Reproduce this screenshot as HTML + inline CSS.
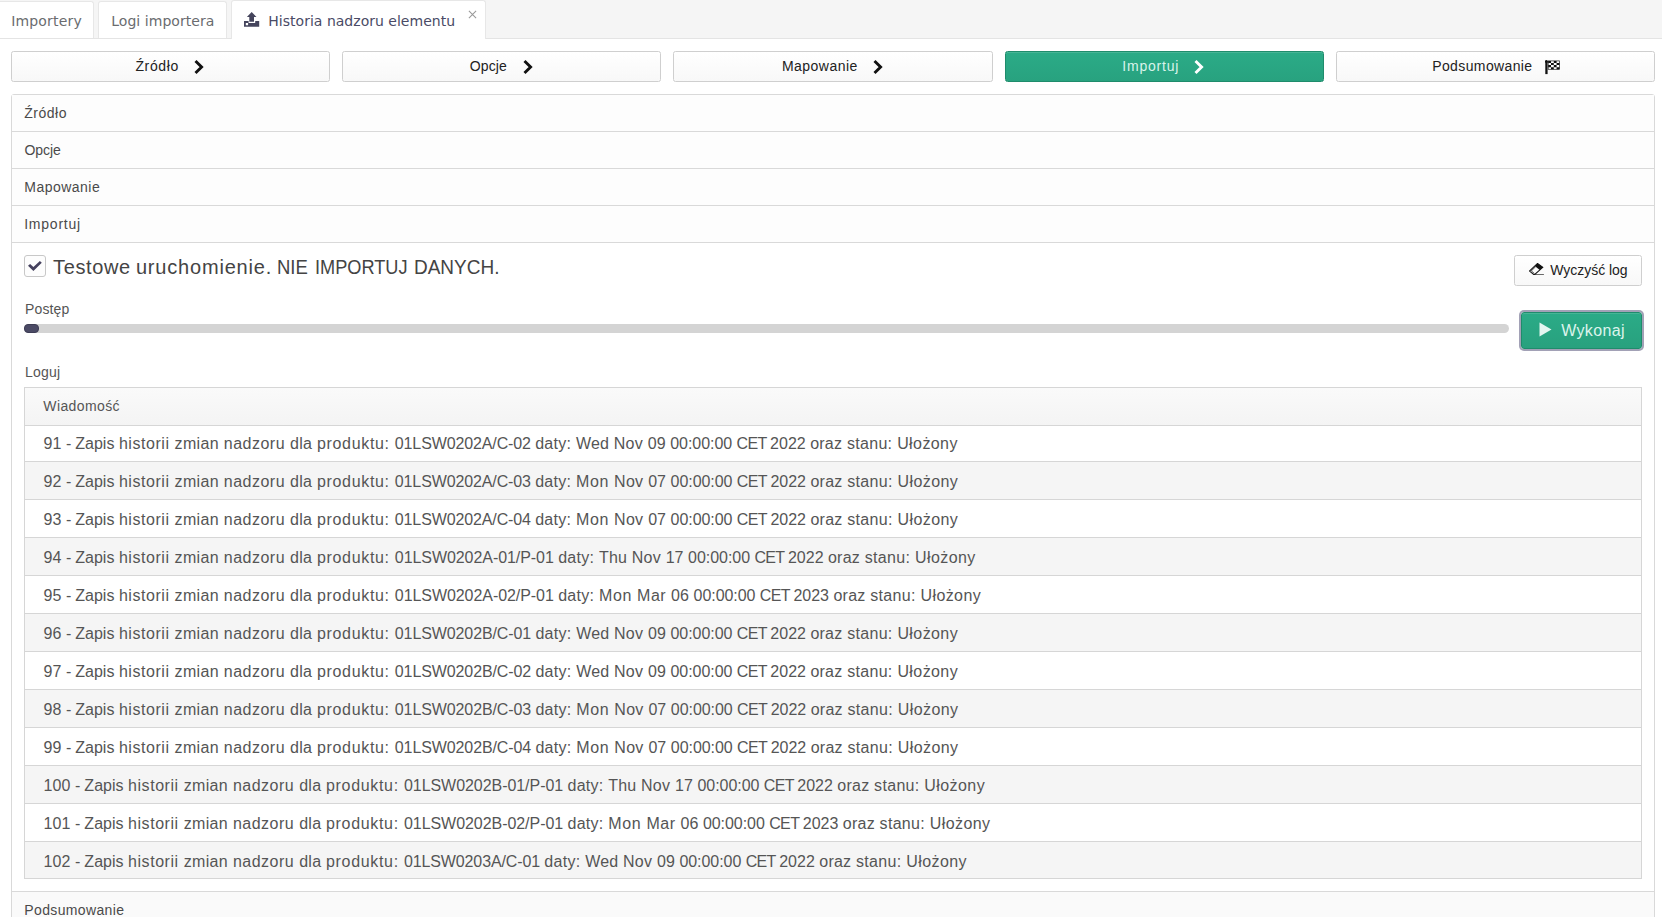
<!DOCTYPE html>
<html lang="pl">
<head>
<meta charset="utf-8">
<title>Historia nadzoru elementu</title>
<style>
*{box-sizing:border-box;margin:0;padding:0}
html,body{width:1662px;height:917px;overflow:hidden;background:#fff}
body{font-family:"Liberation Sans",sans-serif;font-size:14px;color:#444;position:relative}
.abs{position:absolute}
.t{position:absolute;white-space:pre;line-height:1}
#a1,#a2,#a3,#a4,#a5{color:#4a4a4a}
/* tab bar */
#tabbar{left:0;top:0;width:1662px;height:39px;background:#f5f5f5;border-bottom:1px solid #e4e4e4}
.tab{position:absolute;top:1px;height:37px;background:#fff;border:1px solid #e7e7e7;border-bottom:none;border-radius:3px 3px 0 0;color:#6a6c6f;font-size:14px;font-family:"DejaVu Sans","Liberation Sans",sans-serif}
.tab.act{top:0;height:39px;background:#fff;color:#4a4b66}
/* wizard buttons */
.wb{position:absolute;top:51px;height:31px;width:319.2px;border:1px solid #cfcfcf;border-radius:2.5px;background:linear-gradient(#ffffff,#f8f8f8);color:#222}
.wb.on{background:linear-gradient(#2bab87,#28a27f);border-color:#1f8c6c;color:#d9f3ea;box-shadow:inset 0 1px 0 rgba(255,255,255,.13)}
/* accordion */
#acc{left:11px;top:94px;width:1644px;height:840px;border:1px solid #d9d9d9;border-radius:3px;background:#fff}
.hl{position:absolute;left:11px;width:1644px;height:1px;background:#d9d9d9}
.hbg{position:absolute;left:12px;width:1642px;height:36px;background:#fdfdfd}
.btn{position:absolute;border:1px solid #cfcfcf;border-radius:2.5px;background:linear-gradient(#ffffff,#f8f8f8);color:#222}
/* table */
#tbl{left:24px;top:387px;width:1618px;height:492px;border:1px solid #d6d6d6;overflow:hidden;background:#fff}
.row{position:absolute;left:0;width:1616px;height:38px;border-bottom:1px solid #d6d6d6;font-size:16px;color:#555}
.row.ev{background:#f5f5f5}
.row span{position:absolute;left:18.3px;white-space:nowrap;line-height:1}
/*ROWLS*/
.row i{font-style:normal}
.row span{margin-left:0.2px}
.k0{letter-spacing:-0.65px}
.k1{letter-spacing:-0.234px}
.k2{letter-spacing:-0.122px}
.k3{letter-spacing:-0.106px}
.k4{letter-spacing:-0.065px}
.k5{letter-spacing:-0.052px}
.k6{letter-spacing:0.017px}
.k7{letter-spacing:0.06px}
.k8{letter-spacing:-0.05px}
.k9{letter-spacing:0.104px}
.k10{letter-spacing:0px}
.k11{letter-spacing:0.158px}
.k12{letter-spacing:0.174px}
.k13{letter-spacing:0.233px}
.k14{letter-spacing:0.277px}
.k15{letter-spacing:0.281px}
.k16{letter-spacing:0.283px}
.k17{letter-spacing:0.315px}
.k18{letter-spacing:0.361px}
.k19{letter-spacing:0.415px}
.k20{letter-spacing:0.489px}
.k21{letter-spacing:0.508px}
.k22{letter-spacing:0.546px}
.k23{letter-spacing:0.629px}
.k24{letter-spacing:0.675px}
/*ENDROWLS*/
/*FIT*/
#t1{letter-spacing:0.184px;margin-left:-1.39px}
#t2{letter-spacing:0.050px;margin-left:-0.82px}
#t3{letter-spacing:0.015px;margin-left:-0.69px}
#w1{letter-spacing:0.623px;margin-left:-1.17px}
#w2{letter-spacing:0.124px;margin-left:-0.69px}
#w3{letter-spacing:0.479px;margin-left:-0.81px}
#w4{letter-spacing:0.780px;margin-left:-1.14px}
#w5{letter-spacing:0.381px;margin-left:-0.86px}
#a1{letter-spacing:0.525px;margin-left:0.19px}
#a2{letter-spacing:-0.030px;margin-left:0.43px}
#a3{letter-spacing:0.466px;margin-left:0.36px}
#a4{letter-spacing:0.762px;margin-left:0.22px}
#a5{letter-spacing:0.360px;margin-left:0.35px}
#b1{letter-spacing:-0.030px;margin-left:-0.28px}
#l1{letter-spacing:0.120px;margin-left:0.12px}
#b2{letter-spacing:0.356px;margin-left:0.18px}
#l2{letter-spacing:0.170px;margin-left:0.12px}
#th{letter-spacing:0.394px;margin-left:0.02px}
#c1{letter-spacing:0.639px;margin-left:-0.01px}
#c2{letter-spacing:0.813px;margin-left:-1.13px}
#c3{letter-spacing:0.000px;margin-left:-1.40px;transform:scaleX(0.9250);transform-origin:0 0}
#c4{letter-spacing:0.000px;margin-left:-1.30px;transform:scaleX(0.9090);transform-origin:0 0}
#c5{letter-spacing:0.000px;margin-left:-1.40px;transform:scaleX(0.9490);transform-origin:0 0}
/*ENDFIT*/
</style>
</head>
<body>
<div id="tabbar" class="abs"></div>
<div class="tab" style="left:-3px;width:97px"><span class="t" id="t1" style="left:14.5px;top:12px">Importery</span></div>
<div class="tab" style="left:98px;width:129px"><span class="t" id="t2" style="left:13px;top:12px">Logi importera</span></div>
<div class="tab act" style="left:231px;width:255px">
  <svg class="abs" style="left:11.9px;top:10.8px" width="16" height="15" viewBox="0 0 16 15"><path fill="#44445c" fill-rule="evenodd" d="M7.7 0 L12.5 5 H10 V9.7 H5.3 V5 H2.9 Z M0 9.1 H4.6 V10.9 H11.2 V9.1 H15.2 V14.8 H0 Z M1.8 11 h2.3 v2.3 h-2.3 z"/></svg>
  <span class="t" id="t3" style="left:37px;top:13px">Historia nadzoru elementu</span>
  <svg class="abs" style="left:236px;top:9px" width="9" height="9" viewBox="0 0 9 9"><path d="M0.9 0.9 L8.1 8.1 M8.1 0.9 L0.9 8.1" stroke="#999" stroke-width="1.05" fill="none"/></svg>
</div>

<!-- wizard buttons -->
<div class="wb" style="left:11px"><span class="t" id="w1" style="left:124.6px;top:7px">Źródło</span>
  <svg class="abs" style="left:180.8px;top:6.9px" width="12" height="16" viewBox="0 0 12 16"><path d="M2.5 2 L8.6 8 L2.5 14" stroke="#111" stroke-width="2.9" fill="none"/></svg></div>
<div class="wb" style="left:342.2px"><span class="t" id="w2" style="left:127.3px;top:7px">Opcje</span>
  <svg class="abs" style="left:178.8px;top:6.9px" width="12" height="16" viewBox="0 0 12 16"><path d="M2.5 2 L8.6 8 L2.5 14" stroke="#111" stroke-width="2.9" fill="none"/></svg></div>
<div class="wb" style="left:673.4px"><span class="t" id="w3" style="left:108.3px;top:7px">Mapowanie</span>
  <svg class="abs" style="left:197.4px;top:6.9px" width="12" height="16" viewBox="0 0 12 16"><path d="M2.5 2 L8.6 8 L2.5 14" stroke="#111" stroke-width="2.9" fill="none"/></svg></div>
<div class="wb on" style="left:1004.6px"><span class="t" id="w4" style="left:117.9px;top:7px">Importuj</span>
  <svg class="abs" style="left:187.9px;top:6.9px" width="12" height="16" viewBox="0 0 12 16"><path d="M2.5 2 L8.6 8 L2.5 14" stroke="#ffffff" stroke-width="2.9" fill="none"/></svg></div>
<div class="wb" style="left:1335.8px"><span class="t" id="w5" style="left:96.3px;top:7px">Podsumowanie</span>
  <svg class="abs" style="left:208.5px;top:7.7px" width="16" height="15" viewBox="0 0 16 15"><rect x="0.3" y="1.2" width="2.3" height="12.9" fill="#111"/><circle cx="1.45" cy="1.5" r="1.5" fill="#111"/><rect x="3.2" y="0.9" width="11.2" height="8.4" fill="none" stroke="#222" stroke-width="0.7"/><path d="M3.20 0.90h2.8v2.1h-2.8z M8.80 0.90h2.8v2.1h-2.8z M6.00 3.00h2.8v2.1h-2.8z M11.60 3.00h2.8v2.1h-2.8z M3.20 5.10h2.8v2.1h-2.8z M8.80 5.10h2.8v2.1h-2.8z M6.00 7.20h2.8v2.1h-2.8z M11.60 7.20h2.8v2.1h-2.8z" fill="#111"/></svg></div>

<!-- accordion -->
<div id="acc" class="abs"></div>
<div class="hbg" style="top:95px"></div><div class="hbg" style="top:132px"></div><div class="hbg" style="top:169px"></div><div class="hbg" style="top:206px"></div><div class="hbg" style="top:892px;background:#fafafa"></div>
<div class="hl" style="top:131px"></div><div class="hl" style="top:168px"></div><div class="hl" style="top:205px"></div><div class="hl" style="top:242px"></div><div class="hl" style="top:891px"></div>
<span class="t" id="a1" style="left:24px;top:106px">Źródło</span>
<span class="t" id="a2" style="left:24px;top:143px">Opcje</span>
<span class="t" id="a3" style="left:24px;top:180px">Mapowanie</span>
<span class="t" id="a4" style="left:24px;top:217px">Importuj</span>
<span class="t" id="a5" style="left:24px;top:903px">Podsumowanie</span>

<!-- checkbox -->
<div class="abs" style="left:24px;top:255px;width:22px;height:22px;border:1px solid #c8c8c8;border-radius:3px;background:#fdfdfd">
  <svg class="abs" style="left:-1px;top:-1px" width="22" height="22" viewBox="0 0 22 22"><path d="M4 10.7 L6.1 9 L9.4 11.9 L15.9 6 L17.8 7.7 L9.4 15.9 Z" fill="#45415e"/></svg>
</div>
<span class="t" id="cbl" style="left:0;top:257px;font-size:20px;color:#444"><span class="t" id="c1" style="left:53px;top:0">Testowe </span><span class="t" id="c2" style="left:137px;top:0">uruchomienie. </span><span class="t" id="c3" style="left:278px;top:0">NIE </span><span class="t" id="c4" style="left:316px;top:0">IMPORTUJ </span><span class="t" id="c5" style="left:415px;top:0">DANYCH.</span></span>

<div class="btn" style="left:1514px;top:255px;width:128px;height:31px">
  <svg class="abs" style="left:13.8px;top:6.9px" width="15.5" height="12.6" viewBox="0 0 16 13"><path d="M8.76 0.5 L14.2 4.5 L5.4 12.3 L0.5 8.3 Z" fill="none" stroke="#111" stroke-width="1.1"/><path d="M6.9 3.7 L2.4 8.2 L5.7 11" fill="none" stroke="#111" stroke-width="0.8"/><path d="M8.76 0.5 L14.2 4.5 L11.1 7.2 L5.9 3.2 Z" fill="#111"/><path d="M5.4 12.3 H15.4" stroke="#111" stroke-width="1.1"/></svg>
  <span class="t" id="b1" style="left:35.5px;top:7px">Wyczyść log</span>
</div>

<span class="t" id="l1" style="left:25px;top:302px;color:#555">Postęp</span>
<div class="abs" style="left:24px;top:324px;width:1485px;height:9px;border-radius:5px;background:#d4d4d4"></div>
<div class="abs" style="left:24px;top:324px;width:15px;height:9px;border-radius:4px;background:#4b4a65;border:1px solid #3e3d55"></div>

<div class="abs" style="left:1521px;top:312px;width:121px;height:37px;border-radius:3px;background:linear-gradient(#2bab87,#28a17e);border:1px solid #1f8c6c;box-shadow:0 0 0 2px #a2a1b6,inset 0 1px 0 rgba(255,255,255,.13);color:#dcf4ec">
  <svg class="abs" style="left:17.4px;top:8.6px" width="13" height="15" viewBox="0 0 13 15"><path d="M0.5 0.5 L12.5 7.5 L0.5 14.5 Z" fill="#e4f6f0"/></svg>
  <span class="t" id="b2" style="left:39px;top:9.9px;font-size:16px">Wykonaj</span>
</div>

<span class="t" id="l2" style="left:25px;top:365px;color:#555">Loguj</span>

<div id="tbl" class="abs">
  <div class="abs" style="left:0;top:0;width:1616px;height:38px;background:linear-gradient(#fafafa,#f4f4f4);border-bottom:1px solid #d6d6d6;z-index:2"><span class="t" id="th" style="left:18.3px;top:10.5px;color:#555">Wiadomość</span></div>
  <div class="row" style="top:36px"><span id="r1" style="top:11.5px"><i class="k7">91 </i><i class="k1">- </i><i class="k6">Zapis </i><i class="k22">historii </i><i class="k18">zmian </i><i class="k20">nadzoru </i><i class="k14">dla </i><i class="k24">produktu: </i><i class="k2">01LSW0202A/C-02 </i><i class="k16">daty: </i><i class="k12">Wed </i><i class="k15">Nov </i><i class="k7">09 </i><i class="k8">00:00:00 </i><i class="k0">CET </i><i class="k10">2022 </i><i class="k13">oraz </i><i class="k17">stanu: </i><i class="k19">Ułożony</i></span></div>
  <div class="row ev" style="top:74px"><span id="r2" style="top:11.5px"><i class="k7">92 </i><i class="k1">- </i><i class="k6">Zapis </i><i class="k22">historii </i><i class="k18">zmian </i><i class="k20">nadzoru </i><i class="k14">dla </i><i class="k24">produktu: </i><i class="k2">01LSW0202A/C-03 </i><i class="k16">daty: </i><i class="k23">Mon </i><i class="k15">Nov </i><i class="k7">07 </i><i class="k8">00:00:00 </i><i class="k0">CET </i><i class="k10">2022 </i><i class="k13">oraz </i><i class="k17">stanu: </i><i class="k19">Ułożony</i></span></div>
  <div class="row" style="top:112px"><span id="r3" style="top:11.5px"><i class="k7">93 </i><i class="k1">- </i><i class="k6">Zapis </i><i class="k22">historii </i><i class="k18">zmian </i><i class="k20">nadzoru </i><i class="k14">dla </i><i class="k24">produktu: </i><i class="k2">01LSW0202A/C-04 </i><i class="k16">daty: </i><i class="k23">Mon </i><i class="k15">Nov </i><i class="k7">07 </i><i class="k8">00:00:00 </i><i class="k0">CET </i><i class="k10">2022 </i><i class="k13">oraz </i><i class="k17">stanu: </i><i class="k19">Ułożony</i></span></div>
  <div class="row ev" style="top:150px"><span id="r4" style="top:11.5px"><i class="k7">94 </i><i class="k1">- </i><i class="k6">Zapis </i><i class="k22">historii </i><i class="k18">zmian </i><i class="k20">nadzoru </i><i class="k14">dla </i><i class="k24">produktu: </i><i class="k4">01LSW0202A-01/P-01 </i><i class="k16">daty: </i><i class="k11">Thu </i><i class="k15">Nov </i><i class="k7">17 </i><i class="k8">00:00:00 </i><i class="k0">CET </i><i class="k10">2022 </i><i class="k13">oraz </i><i class="k17">stanu: </i><i class="k19">Ułożony</i></span></div>
  <div class="row" style="top:188px"><span id="r5" style="top:11.5px"><i class="k7">95 </i><i class="k1">- </i><i class="k6">Zapis </i><i class="k22">historii </i><i class="k18">zmian </i><i class="k20">nadzoru </i><i class="k14">dla </i><i class="k24">produktu: </i><i class="k4">01LSW0202A-02/P-01 </i><i class="k16">daty: </i><i class="k23">Mon </i><i class="k21">Mar </i><i class="k7">06 </i><i class="k8">00:00:00 </i><i class="k0">CET </i><i class="k10">2023 </i><i class="k13">oraz </i><i class="k17">stanu: </i><i class="k19">Ułożony</i></span></div>
  <div class="row ev" style="top:226px"><span id="r6" style="top:11.5px"><i class="k7">96 </i><i class="k1">- </i><i class="k6">Zapis </i><i class="k22">historii </i><i class="k18">zmian </i><i class="k20">nadzoru </i><i class="k14">dla </i><i class="k24">produktu: </i><i class="k3">01LSW0202B/C-01 </i><i class="k16">daty: </i><i class="k12">Wed </i><i class="k15">Nov </i><i class="k7">09 </i><i class="k8">00:00:00 </i><i class="k0">CET </i><i class="k10">2022 </i><i class="k13">oraz </i><i class="k17">stanu: </i><i class="k19">Ułożony</i></span></div>
  <div class="row" style="top:264px"><span id="r7" style="top:11.5px"><i class="k7">97 </i><i class="k1">- </i><i class="k6">Zapis </i><i class="k22">historii </i><i class="k18">zmian </i><i class="k20">nadzoru </i><i class="k14">dla </i><i class="k24">produktu: </i><i class="k3">01LSW0202B/C-02 </i><i class="k16">daty: </i><i class="k12">Wed </i><i class="k15">Nov </i><i class="k7">09 </i><i class="k8">00:00:00 </i><i class="k0">CET </i><i class="k10">2022 </i><i class="k13">oraz </i><i class="k17">stanu: </i><i class="k19">Ułożony</i></span></div>
  <div class="row ev" style="top:302px"><span id="r8" style="top:11.5px"><i class="k7">98 </i><i class="k1">- </i><i class="k6">Zapis </i><i class="k22">historii </i><i class="k18">zmian </i><i class="k20">nadzoru </i><i class="k14">dla </i><i class="k24">produktu: </i><i class="k3">01LSW0202B/C-03 </i><i class="k16">daty: </i><i class="k23">Mon </i><i class="k15">Nov </i><i class="k7">07 </i><i class="k8">00:00:00 </i><i class="k0">CET </i><i class="k10">2022 </i><i class="k13">oraz </i><i class="k17">stanu: </i><i class="k19">Ułożony</i></span></div>
  <div class="row" style="top:340px"><span id="r9" style="top:11.5px"><i class="k7">99 </i><i class="k1">- </i><i class="k6">Zapis </i><i class="k22">historii </i><i class="k18">zmian </i><i class="k20">nadzoru </i><i class="k14">dla </i><i class="k24">produktu: </i><i class="k3">01LSW0202B/C-04 </i><i class="k16">daty: </i><i class="k23">Mon </i><i class="k15">Nov </i><i class="k7">07 </i><i class="k8">00:00:00 </i><i class="k0">CET </i><i class="k10">2022 </i><i class="k13">oraz </i><i class="k17">stanu: </i><i class="k19">Ułożony</i></span></div>
  <div class="row ev" style="top:378px"><span id="r10" style="top:11.5px"><i class="k9">100 </i><i class="k1">- </i><i class="k6">Zapis </i><i class="k22">historii </i><i class="k18">zmian </i><i class="k20">nadzoru </i><i class="k14">dla </i><i class="k24">produktu: </i><i class="k5">01LSW0202B-01/P-01 </i><i class="k16">daty: </i><i class="k11">Thu </i><i class="k15">Nov </i><i class="k7">17 </i><i class="k8">00:00:00 </i><i class="k0">CET </i><i class="k10">2022 </i><i class="k13">oraz </i><i class="k17">stanu: </i><i class="k19">Ułożony</i></span></div>
  <div class="row" style="top:416px"><span id="r11" style="top:11.5px"><i class="k9">101 </i><i class="k1">- </i><i class="k6">Zapis </i><i class="k22">historii </i><i class="k18">zmian </i><i class="k20">nadzoru </i><i class="k14">dla </i><i class="k24">produktu: </i><i class="k5">01LSW0202B-02/P-01 </i><i class="k16">daty: </i><i class="k23">Mon </i><i class="k21">Mar </i><i class="k7">06 </i><i class="k8">00:00:00 </i><i class="k0">CET </i><i class="k10">2023 </i><i class="k13">oraz </i><i class="k17">stanu: </i><i class="k19">Ułożony</i></span></div>
  <div class="row ev" style="top:454px"><span id="r12" style="top:11.5px"><i class="k9">102 </i><i class="k1">- </i><i class="k6">Zapis </i><i class="k22">historii </i><i class="k18">zmian </i><i class="k20">nadzoru </i><i class="k14">dla </i><i class="k24">produktu: </i><i class="k2">01LSW0203A/C-01 </i><i class="k16">daty: </i><i class="k12">Wed </i><i class="k15">Nov </i><i class="k7">09 </i><i class="k8">00:00:00 </i><i class="k0">CET </i><i class="k10">2022 </i><i class="k13">oraz </i><i class="k17">stanu: </i><i class="k19">Ułożony</i></span></div>
</div>
</body>
</html>
